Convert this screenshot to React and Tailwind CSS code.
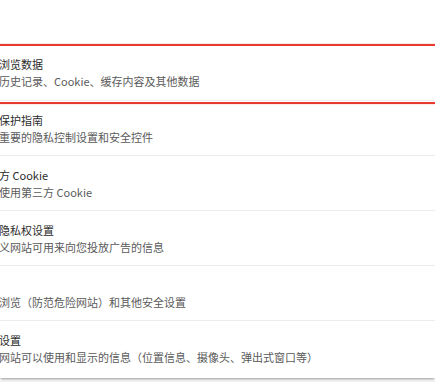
import React from 'react';

const rows = [
  { title: '清除浏览数据', sub: '清除历史记录、Cookie、缓存内容及其他数据' },
  { title: '隐私保护指南', sub: '查看重要的隐私控制设置和安全控件' },
  { title: '第三方 Cookie', sub: '阻止使用第三方 Cookie' },
  { title: '广告隐私权设置', sub: '自定义网站可用来向您投放广告的信息' },
  { title: '安全', sub: '安全浏览（防范危险网站）和其他安全设置' },
  { title: '网站设置', sub: '控制网站可以使用和显示的信息（位置信息、摄像头、弹出式窗口等）' },
];

export default function App() {
  return (
    <div className="w-[435px] h-[382px] overflow-hidden bg-[#f1f1f1] font-['Segoe_UI','Noto_Sans_CJK_SC',sans-serif]">
      <div className="relative bg-white pt-[45px] pb-[3px] shadow-[0_2px_2px_-1px_rgba(0,0,0,0.35)]">
        {/* highlighted row */}
        <div className="absolute left-[-10px] right-[-10px] top-[44px] h-[60px] border-y-2 border-[#e8392f] shadow-[0_0_1px_rgba(232,57,47,0.6)]" />

        <div className="flex flex-col">
          {rows.map((row, i) => (
            <div
              key={row.title}
              className={`h-[55px] flex flex-col justify-center ${i > 0 ? 'border-t border-[#ececec]' : ''}`}
            >
              <div className="-ml-[23px] whitespace-nowrap text-[11px] leading-[17px] text-[#2b2b2b]">{row.title}</div>
              <div className="-ml-[23px] whitespace-nowrap text-[11px] leading-[16px] text-[#5a5a5a]">{row.sub}</div>
            </div>
          ))}
        </div>
      </div>
    </div>
  );
}
